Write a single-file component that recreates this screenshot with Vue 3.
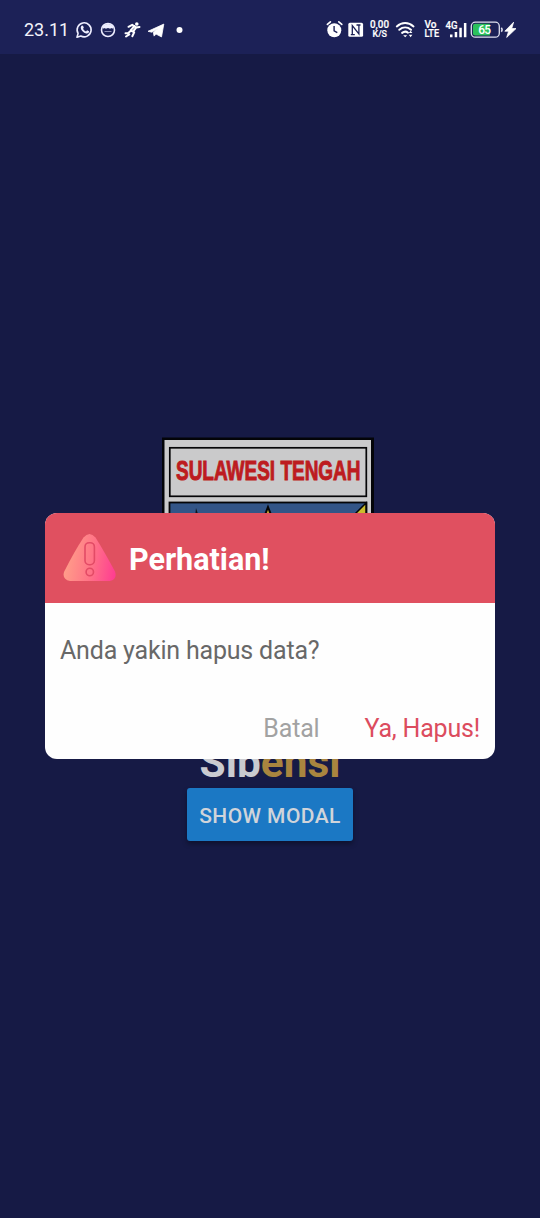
<script setup>
const title = 'Perhatian!'
</script>

<template>
  <div class="screen">
    <header class="status">
      <span class="clock">23.11</span>
      <svg class="icons-left" width="114" height="24" viewBox="0 0 114 24">
        <g fill="none" stroke="#eef" stroke-width="1.6">
          <path d="M2 19.2l1.1-3.8A7 7 0 1 1 5.8 18z" stroke-linejoin="round" />
          <circle cx="33" cy="12" r="6.5" />
        </g>
        <path d="M6.3 8.1c.5-.9 1.5-.7 1.8 0l.7 1.5-.7 1.2c.7 1.4 1.6 2.1 2.9 2.6l1.1-1.1 2 1c-.1 1.7-1.5 2.4-2.9 2.1-2.8-.7-5.2-3-5.5-5.7z" fill="#eef" />
        <path d="M27.5 9a6.5 6.5 0 0 1 11 0l-1 1.8-1.300-.9-1 .9-2.200-.8-2.200.8-1-.9-1.300.9z" fill="#eef" />
        <path d="M29.5 13.5h7" stroke="#8d90b4" fill="none" />
        <g stroke="#fff" fill="none" stroke-width="2" stroke-linecap="round" stroke-linejoin="round">
          <path d="M53.5 8.8l3.7-2 4.1 2.8 3.2-.6M59.6 8l-4 4.4 3.6 2-1.9 3.8M55.3 13.3l-2.4 2H50.5M61.4 9.4l-3 3.6M51 18.5l3.3-2.2" />
        </g>
        <circle cx="61.8" cy="6" r="1.8" fill="#fff" />
        <path d="M73 13.300l15.800-7.200-2.300 12.800-5.400-2.800-2 2-.8-3.800 5-4.100-6.500 4z" fill="#fff" stroke="#fff" stroke-width=".8" stroke-linejoin="round" />
        <circle cx="104.500" cy="12" r="3" fill="#fff" />
      </svg>
      <span class="gap"></span>
      <svg class="icons-right" width="192" height="24" viewBox="0 0 192 24">
        <path d="M1.400 6.400l3-2.600M15.800 6.400l-3-2.600" fill="none" stroke="#fff" stroke-linecap="round" stroke-width="1.700" />
        <circle cx="8.300" cy="12.200" r="7" fill="#fff" />
        <path d="M8.100 8v4.800l3.200 1.900" fill="none" stroke="#1c2156" stroke-width="1.400" />
        <rect x="22.300" y="4.800" width="14.800" height="14" rx="1.600" fill="#fff" />
        <path d="M26.300 16.800V7.600l6.600 8.300V6.800M24.800 16.600h4M30.500 7h4" fill="none" stroke="#1c2156" stroke-width="1.300" />
        <g fill="#fff" font-family="Roboto, sans-serif" font-weight="500" stroke="#fff" stroke-width=".2">
          <text x="44" y="10" font-size="10" textLength="19" lengthAdjust="spacingAndGlyphs">0,00</text>
          <text x="46.500" y="19" font-size="8.500" textLength="14.500" lengthAdjust="spacingAndGlyphs">K/S</text>
          <text x="98.500" y="10.200" font-size="10" textLength="12" lengthAdjust="spacingAndGlyphs">Vo</text>
          <text x="98.500" y="19.200" font-size="10" textLength="14.600" lengthAdjust="spacingAndGlyphs">LTE</text>
          <text x="119.500" y="10.600" font-size="10.500" textLength="12" lengthAdjust="spacingAndGlyphs">4G</text>
        </g>
        <path d="M70.800 8.400c5-4.400 11.700-4.400 16.700 0M73.300 11.800c3.500-3 8.200-3 11.700 0M76.100 14.900c2-1.600 4.200-1.600 5.900-.2" fill="none" stroke="#fff" stroke-width="2" stroke-linecap="round" />
        <path d="M77.200 17.200h4l-2 2.100zM84.600 12.800l1.800 2.200h-3.600zM84.600 19.200l1.800-2.400h-3.600z" fill="#fff" />
        <path d="M124 16.600h2.500v2.600H124zM128.700 14h2.500v5.200h-2.500zM133.300 9.800h2.500v9.400h-2.500zM137.900 5h2.500v14.200h-2.500z" fill="#fff" />
        <rect x="145.300" y="4.200" width="28" height="15" rx="4" fill="none" stroke="#dfe0ef" stroke-width="1.300" />
        <path d="M149.200 5.800h14.700v11.800h-14.700a2.300 2.300 0 0 1-2.300-2.300V8.100a2.300 2.300 0 0 1 2.300-2.300z" fill="#2cc15c" />
        <path d="M175.300 9.800q1.600 2 0 4" fill="none" stroke="#dfe0ef" stroke-width="1.500" />
        <text x="152.200" y="16" fill="#fff" font-family="Roboto, sans-serif" font-weight="500" font-size="12" textLength="13">65</text>
        <path d="M187.600 4.200l-8.800 9h3.800l-1.900 6.200 9.300-8.800h-4.300z" fill="#fff" stroke="#fff" stroke-width=".8" stroke-linejoin="round" />
      </svg>
    </header>

    <main class="content">
      <svg class="crest" width="212" height="294" viewBox="0 0 212 294">
        <rect y=".5" width="212" height="284" fill="#030408" />
        <rect x="2.500" y="3" width="206.500" height="280" fill="#cacacb" />
        <rect x="7.800" y="10.800" width="196.500" height="48.500" fill="#cacacb" stroke="#050507" stroke-width="1.700" />
        <text x="14" y="43.300" fill="#bd1c20" font-family="Liberation Sans, sans-serif" font-weight="700" font-size="28" textLength="184.500" lengthAdjust="spacingAndGlyphs" stroke="#bd1c20" stroke-width="1">SULAWESI TENGAH</text>
        <rect x="7.500" y="65.500" width="197" height="200" fill="#335587" stroke="#050507" stroke-width="1.800" />
        <path d="M34 71l3 9h-4z" fill="#10131c" />
        <path d="M106 70l5 13h-10z" fill="#c2a72c" stroke="#050507" stroke-width="2" />
        <path d="M204 66v22h-22z" fill="#cbbd2c" stroke="#050507" stroke-width="1.500" />
      </svg>
      <h1 class="brand"><span>Sib</span><span class="gold">ensi</span></h1>
      <button class="show">SHOW MODAL</button>
    </main>

    <section class="modal" role="dialog">
      <div class="modal-head">
        <svg width="54" height="50" viewBox="0 0 54 50">
          <defs>
            <linearGradient id="warn" x1="0" y1=".65" x2="1" y2=".8">
              <stop offset="0" stop-color="#ff9f89" />
              <stop offset=".5" stop-color="#ff7587" />
              <stop offset="1" stop-color="#ff3d91" />
            </linearGradient>
          </defs>
          <path d="M20.500 4.500q6-7 12 0Q41 18 52 38.500q2.500 8-5.300 9.500H7q-8-1.500-6-9Q11 19 20.500 4.500z" fill="url(#warn)" />
          <g fill="none" stroke="#e34b66" stroke-width="1.600">
            <rect x="22" y="9.700" width="9.400" height="22" rx="4.200" />
            <circle cx="26.800" cy="39" r="3.700" />
          </g>
        </svg>
        <h2>{{ title }}</h2>
      </div>
      <div class="modal-body">
        <p>Anda yakin hapus data?</p>
        <div class="actions">
          <span class="cancel">Batal</span>
          <span class="confirm">Ya, Hapus!</span>
        </div>
      </div>
    </section>
  </div>
</template>

<style>
body {
  margin: 0;
  background: #161a45;
}
</style>

<style scoped>
.screen {
  position: relative;
  height: 1218px;
  overflow: hidden;
  background: #161a45;
  font-family: Roboto, sans-serif;
}
.status {
  display: flex;
  align-items: center;
  box-sizing: border-box;
  height: 54px;
  padding: 5px 22px 0 24px;
  background: #1c2157;
  color: #f2f2fa;
}
.clock {
  width: 51px;
  font-size: 18px;
  line-height: 24px;
}
.icons-left,
.icons-right {
  display: block;
}
.gap {
  flex: 1;
}
.content {
  display: flex;
  flex-direction: column;
  align-items: center;
  padding-top: 383px;
}
.crest {
  display: block;
  margin-right: 4px;
  overflow: visible;
}
.brand {
  margin: 0;
  height: 57px;
  font-size: 42.4px;
  line-height: 63px;
  font-weight: 700;
  color: #cacbd0;
}
.gold {
  color: #a9853f;
}
.show {
  width: 166px;
  height: 53px;
  padding: 2px 0 0;
  border: 0;
  border-radius: 3px;
  background: #1b78c4;
  color: #d0d4da;
  box-shadow: 0 3px 5px rgba(0, 0, 0, 0.35);
  font: 500 21px Roboto, sans-serif;
  letter-spacing: 0.42px;
  white-space: nowrap;
}
.modal {
  position: absolute;
  top: 513px;
  left: 45px;
  width: 450px;
  height: 246px;
  border-radius: 12px;
  overflow: hidden;
  background: #fefefe;
}
.modal-head {
  display: flex;
  align-items: center;
  gap: 12px;
  box-sizing: border-box;
  height: 90px;
  padding-left: 18px;
  background: #e05060;
}
.modal-head h2 {
  margin: 0;
  padding-top: 4px;
  font-size: 30.5px;
  line-height: 36px;
  font-weight: 700;
  color: #fff;
}
.modal-body {
  padding: 32px 15px 0;
  font-size: 25px;
  line-height: 32px;
  letter-spacing: -0.19px;
}
.modal-body p {
  margin: 0;
  color: #686868;
}
.actions {
  display: flex;
  justify-content: flex-end;
  gap: 45px;
  padding-top: 46px;
}
.cancel {
  color: #a2a2a2;
}
.confirm {
  color: #dc4c5e;
}
</style>
